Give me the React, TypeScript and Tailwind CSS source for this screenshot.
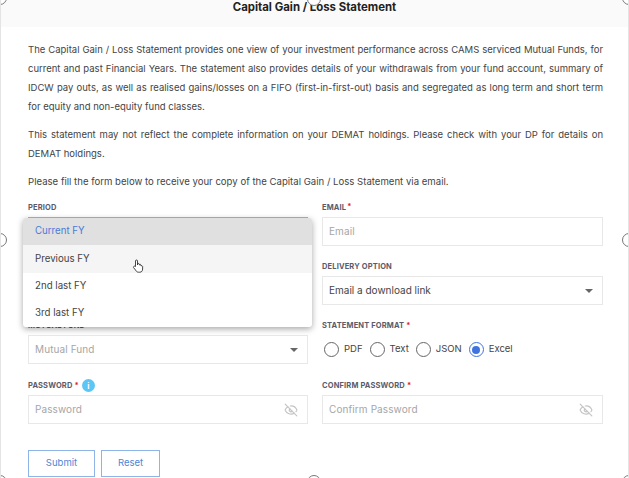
import React from "react";
import { EyeOff } from "lucide-react";

function Label({ text, req, small }: { text: string; req?: boolean; small?: boolean }) {
  return (
    <div className="h-[19px] pt-[1px] flex items-center text-[7.5px] font-bold tracking-[0.02em] text-[#5b5b6b] uppercase leading-none">
      <span>{text}</span>
      {req && <span className={small ? "text-[#e0202c] ml-[1px] -mt-[3px]" : "text-[#e0202c] ml-[2px]"}>*</span>}
    </div>
  );
}

function Box({ text, dark, caret, eye }: { text: string; dark?: boolean; caret?: boolean; eye?: boolean }) {
  return (
    <div className="h-[29px] border border-[#e8e8e8] bg-white flex items-center justify-between pl-[6px] pr-[9px]">
      <span className={dark ? "text-[10px] text-[#444]" : "text-[10px] tracking-[0.01em] text-[#a6a6a6]"}>{text}</span>
      {caret && <span className="w-0 h-0 border-x-[4px] border-x-transparent border-t-[4px] border-t-[#666]" />}
      {eye && <EyeOff size={14} strokeWidth={2} className="text-[#c4c4c4]" />}
    </div>
  );
}

function Radio({ text, on }: { text: string; on?: boolean }) {
  return (
    <label className="flex items-center gap-[5px] text-[9.5px] text-[#444]">
      <span className={on ? "w-[15px] h-[15px] rounded-full border-[1.5px] border-[#3f74e0] flex items-center justify-center" : "w-[15px] h-[15px] rounded-full border-[1.5px] border-[#666]"}>
        {on && <span className="w-[8px] h-[8px] rounded-full bg-[#3f74e0]" />}
      </span>
      {text}
    </label>
  );
}

function Notch({ cls }: { cls: string }) {
  return <span className={"absolute w-[14px] h-[14px] rounded-full bg-white border border-[#777] " + cls} />;
}

const lines = [
  "The Capital Gain / Loss Statement provides one view of your investment performance across CAMS serviced Mutual Funds, for",
  "current and past Financial Years. The statement also provides details of your withdrawals from your fund account, summary of",
  "IDCW pay outs, as well as realised gains/losses on a FIFO (first-in-first-out) basis and segregated as long term and short term",
];

export default function App() {
  return (
    <div className="relative w-[629px] h-[478px] overflow-hidden bg-white border-x border-[#e4e4e4] font-['Inter','Noto_Sans',sans-serif] text-[#444]">
      <div className="h-[27px] bg-[#fafafa] flex items-start justify-center pt-[0.5px]">
        <h1 className="text-[11.4px] leading-[13px] font-bold text-[#222]">Capital Gain / Loss Statement</h1>
      </div>
      <div className="pl-[27px] pr-[25px]">
        <div className="text-[9.5px] leading-[19px] pt-[13px]">
          {lines.map((l) => (
            <div key={l} className="[text-align-last:justify] whitespace-nowrap">{l}</div>
          ))}
          <div>for equity and non-equity fund classes.</div>
        </div>
        <div className="text-[9.5px] leading-[19px] pt-[9px]">
          <div className="[text-align-last:justify]">This statement may not reflect the complete information on your DEMAT holdings. Please check with your DP for details on</div>
          <div>DEMAT holdings.</div>
        </div>
        <div className="text-[9.6px] leading-[19px] pt-[9px]">
          Please fill the form below to receive your copy of the Capital Gain / Loss Statement via email.
        </div>
      </div>
      <div className="grid grid-cols-[280px_281px] gap-x-[14px] pl-[27px] mt-[7px]">
        <div className="relative h-[59px]">
          <Label text="Period" />
          <div className="relative z-20 h-[1px] bg-[#8aa8e6]" />
          <div className="absolute z-10 left-[-5px] top-[20px] w-[289px] rounded-[3px] bg-white shadow-[0_2px_6px_rgba(0,0,0,0.35)] overflow-hidden text-[9.7px]">
            <div className="h-[27px] flex items-center pl-[12px] bg-[#e0e0e0] text-[#4a7ad8]">Current FY</div>
            <div className="h-[28px] flex items-center pl-[12px] bg-[#f5f5f5]">Previous FY</div>
            <div className="h-[27px] flex items-center pl-[12px]">2nd last FY</div>
            <div className="h-[27px] flex items-center pl-[12px]">3rd last FY</div>
          </div>
        </div>
        <div className="h-[59px]">
          <Label text="Email" req small />
          <Box text="Email" />
        </div>
        <div className="h-[59px]" />
        <div className="h-[59px]">
          <Label text="Delivery Option" />
          <Box text="Email a download link" dark caret />
        </div>
        <div className="h-[60px]">
          <Label text="Mutual Fund" />
          <Box text="Mutual Fund" caret />
        </div>
        <div className="h-[60px]">
          <Label text="Statement Format" req />
          <div className="h-[29px] flex items-center gap-[7px] pl-[2px]">
            <Radio text="PDF" />
            <Radio text="Text" />
            <Radio text="JSON" />
            <Radio text="Excel" on />
          </div>
        </div>
        <div>
          <div className="flex items-center h-[19px]">
            <Label text="Password" req />
            <span className="ml-[3px] w-[13px] h-[13px] rounded-full bg-[#5cc6f7] text-white text-[8px] font-bold flex items-center justify-center">i</span>
          </div>
          <Box text="Password" eye />
        </div>
        <div>
          <Label text="Confirm Password" req />
          <Box text="Confirm Password" eye />
        </div>
      </div>
      <div className="flex gap-[6px] pl-[27px] mt-[26px]">
        <button className="w-[67px] h-[27px] border-[1.5px] border-[#8fb4e8] text-[#4a86d8] text-[9.5px]">Submit</button>
        <button className="w-[59px] h-[27px] border-[1.5px] border-[#8fb4e8] text-[#4a86d8] text-[9.5px]">Reset</button>
      </div>
      <Notch cls="left-[-8px] top-[233px]" />
      <Notch cls="right-[-8px] top-[233px]" />
      <Notch cls="left-[-8px] top-[-9px]" />
      <Notch cls="right-[-8px] top-[-9px]" />
      <Notch cls="left-[306px] top-[-8px]" />
      <Notch cls="left-[-8px] bottom-[-11px]" />
      <Notch cls="right-[-8px] bottom-[-11px]" />
      <Notch cls="left-[306px] bottom-[-11px]" />
      <svg className="absolute left-[131px] top-[259px] z-20" width="12" height="14" viewBox="0 0 12 14">
        <path d="M3.5 7V2a1 1 0 0 1 2 0v4l0-1a1 1 0 0 1 1.8 0v1a1 1 0 0 1 1.7 0v1a1 1 0 0 1 1.6 .3V10c0 2-1 3.2-2.8 3.2H6.5C5 13.200 4.500 12.500 3.500 11L1.500 8.500C1 7.500 2.500 6.500 3.500 7.500Z" fill="#fff" stroke="#333" strokeWidth="0.9" />
      </svg>
    </div>
  );
}
